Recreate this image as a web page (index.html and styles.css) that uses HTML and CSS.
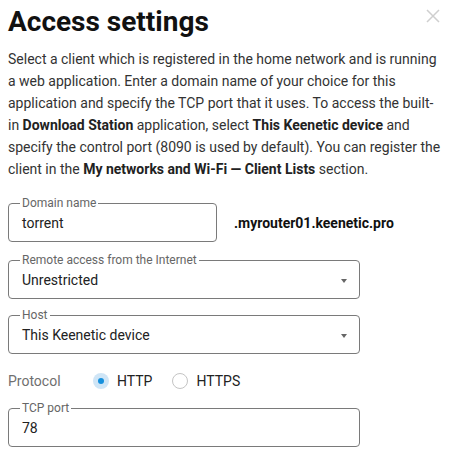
FILE: index.html
```html
<!DOCTYPE html>
<html lang="en">
<head>
<meta charset="utf-8">
<title>Access settings</title>
<link rel="stylesheet" href="styles.css">
</head>
<body>
<div class="dialog">
  <div class="header">
    <h1 class="title">Access settings</h1>
    <button class="close" aria-label="Close">
      <svg width="14" height="14" viewBox="0 0 14 14"><path d="M1 1L13 13M13 1L1 13" stroke="#cfcfcf" stroke-width="1.5" fill="none"/></svg>
    </button>
  </div>
  <p class="desc">Select a client which is registered in the home network and is running a web application. Enter a domain name of your choice for this application and specify the TCP port that it uses. To access the built-in <b>Download Station</b> application, select <b>This Keenetic device</b> and specify the control port (8090 is used by default). You can register the client in the <b>My networks and Wi-Fi — Client Lists</b> section.</p>

  <div class="domain-row">
    <fieldset class="field field-short">
      <legend class="field-label">Domain name</legend>
      <div class="field-value">torrent</div>
    </fieldset>
    <span class="suffix">.myrouter01.keenetic.pro</span>
  </div>

  <fieldset class="field field-wide">
    <legend class="field-label">Remote access from the Internet</legend>
    <div class="field-value select">Unrestricted<span class="arrow"></span></div>
  </fieldset>

  <fieldset class="field field-wide">
    <legend class="field-label">Host</legend>
    <div class="field-value select">This Keenetic device<span class="arrow"></span></div>
  </fieldset>

  <div class="protocol">
    <span class="protocol-label">Protocol</span>
    <label class="radio"><span class="radio-mark checked"></span>HTTP</label>
    <label class="radio"><span class="radio-mark"></span>HTTPS</label>
  </div>

  <fieldset class="field field-wide">
    <legend class="field-label">TCP port</legend>
    <div class="field-value">78</div>
  </fieldset>
</div>
</body>
</html>
```
FILE: styles.css
```css
html, body {
  margin: 0;
  padding: 0;
  background: #fff;
}
body {
  font-family: Roboto, "Liberation Sans", sans-serif;
  color: #222;
}
.dialog {
  padding: 4px 8px 0 8px;
}
.header {
  display: flex;
  justify-content: space-between;
  align-items: flex-start;
}
.title {
  margin: 0;
  font-size: 28px;
  line-height: 36px;
  font-weight: 700;
  color: #111;
}
.close {
  border: 0;
  background: none;
  padding: 0;
  margin: 5px 3px 0 0;
  width: 14px;
  height: 14px;
  display: block;
}
.close svg { display: block; }
.desc {
  margin: 8px 0 0;
  font-size: 14px;
  line-height: 22px;
  color: #333;
}
.desc b { font-weight: 700; color: #222; }

.field {
  margin: 0;
  padding: 0 12px 1px 11px;
  border: 1px solid #7a7a7a;
  border-radius: 4px;
  min-width: 0;
}
.field-short { width: 209px; box-sizing: border-box; }
.field-wide { width: 352px; box-sizing: border-box; margin-top: 9px; }
.field-label {
  padding: 0 2px;
  font-size: 12px;
  line-height: 14px;
  color: #666;
}
.field-value {
  position: relative;
  margin-top: -3px;
  height: 33px;
  line-height: 33px;
  font-size: 14px;
  color: #222;
  padding-left: 2px;
}
.arrow {
  position: absolute;
  right: 0;
  top: 15px;
  width: 0;
  height: 0;
  border-left: 3px solid transparent;
  border-right: 3px solid transparent;
  border-top: 4px solid #666;
}
.domain-row {
  display: flex;
  align-items: center;
  gap: 17px;
  margin-top: 16px;
}
.domain-row .suffix {
  font-size: 14px;
  font-weight: 700;
  color: #111;
  margin-top: 8px;
}
.domain-row + .field { margin-top: 11px; }

.protocol {
  display: flex;
  align-items: center;
  height: 24px;
  margin: 15px 0 8px;
  font-size: 14px;
}
.protocol-label {
  color: #6f6f6f;
  width: 85px;
}
.radio {
  display: flex;
  align-items: center;
  gap: 8px;
  margin-right: 20px;
  color: #222;
}
.radio-mark {
  width: 16px;
  height: 16px;
  box-sizing: border-box;
  border-radius: 50%;
  border: 1px solid #c4c4c4;
  background: #fff;
  position: relative;
}
.radio-mark.checked {
  border: 0;
  background: #cfe5f6;
}
.radio-mark.checked::after {
  content: "";
  position: absolute;
  left: 5px;
  top: 5px;
  width: 6px;
  height: 6px;
  border-radius: 50%;
  background: #1690dc;
}
.protocol + .field { margin-top: 0; }
```
